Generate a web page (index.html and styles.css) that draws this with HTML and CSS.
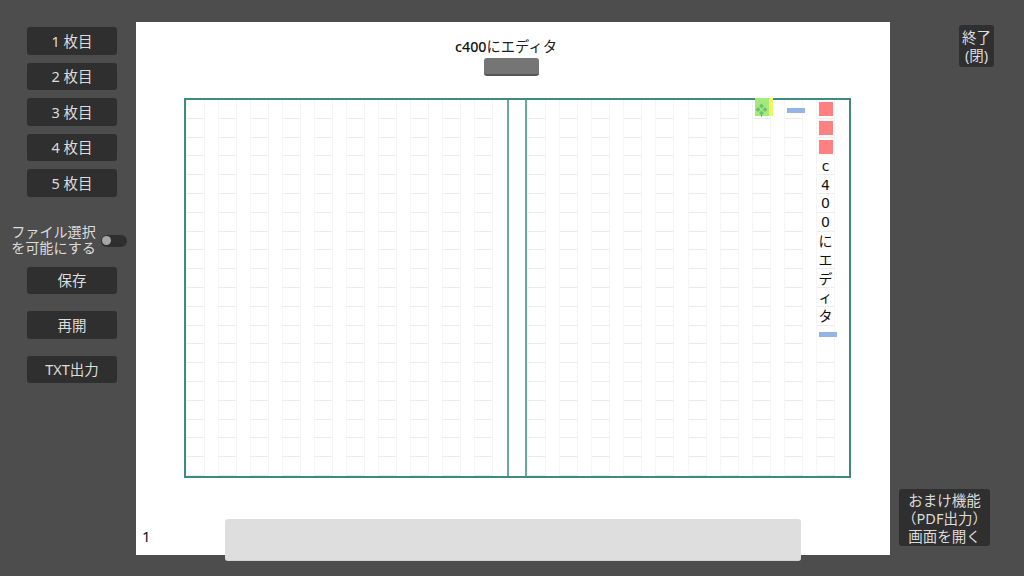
FILE: index.html
```html
<!DOCTYPE html>
<html lang="ja">
<head>
<meta charset="utf-8">
<title>c400にエディタ</title>
<link rel="stylesheet" href="styles.css">
</head>
<body>
<div class="app">
  <aside class="side">
    <button class="btn sheet">1 枚目</button>
    <button class="btn sheet">2 枚目</button>
    <button class="btn sheet">3 枚目</button>
    <button class="btn sheet">4 枚目</button>
    <button class="btn sheet">5 枚目</button>
    <div class="toggle-row">
      <span class="toggle-label">ファイル選択<br>を可能にする</span>
      <span class="toggle"><span class="knob"></span></span>
    </div>
    <button class="btn save">保存</button>
    <button class="btn resume">再開</button>
    <button class="btn txt">TXT出力</button>
  </aside>
  <main class="paper">
    <h1 class="title"><span class="latin">c400</span>にエディタ</h1>
    <div class="title-btn"></div>
    <div class="board">
      <div class="page page-left">
        <div class="col"></div><div class="col"></div><div class="col"></div><div class="col"></div><div class="col"></div>
        <div class="col"></div><div class="col"></div><div class="col"></div><div class="col"></div><div class="col"></div>
      </div>
      <div class="spine"></div>
      <div class="page page-right">
        <div class="col"></div><div class="col"></div><div class="col"></div><div class="col"></div><div class="col"></div>
        <div class="col"></div><div class="col"></div>
        <div class="col">
          <div class="cursor">
            <svg class="clover" viewBox="0 0 12 12" width="13" height="13">
              <path d="M6 .5 8.2 2.8 6 5 3.8 2.8ZM2.8 3.8 5 6 2.8 8.2.5 6ZM9.2 3.8 11.5 6 9.2 8.2 7 6ZM6 7 8.2 9.2 6 11.5 3.8 9.2Z"/>
              <path class="stem" d="M5.4 11.6h1.2L6 13Z"/>
            </svg>
          </div>
        </div>
        <div class="col"><div class="dash dash-top"></div></div>
        <div class="col">
          <div class="cell"><span class="mark"></span></div>
          <div class="cell"><span class="mark"></span></div>
          <div class="cell"><span class="mark"></span></div>
          <div class="cell">c</div>
          <div class="cell">4</div>
          <div class="cell">0</div>
          <div class="cell">0</div>
          <div class="cell">に</div>
          <div class="cell">エ</div>
          <div class="cell">デ</div>
          <div class="cell">ィ</div>
          <div class="cell">タ</div>
          <div class="cell cell-dash"><span class="dash"></span></div>
        </div>
      </div>
    </div>
    <div class="foot">
      <span class="page-no">1</span>
      <div class="bar"></div>
    </div>
  </main>
  <aside class="right">
    <button class="btn end">終了<br>(閉)</button>
    <button class="btn extra">おまけ機能<br>（PDF出力）<br>画面を開く</button>
  </aside>
</div>
</body>
</html>
```

FILE: styles.css
```css
* { box-sizing: border-box; }
html, body { margin: 0; height: 100%; }
body {
  background: #4d4d4d;
  font-family: "Noto Sans", "Noto Sans CJK JP", sans-serif;
  overflow: hidden;
}
.app { display: flex; width: 1024px; height: 576px; }

.btn {
  display: block;
  border: 0;
  padding: 0;
  background: #2f2f2f;
  color: #dcdcdc;
  border-radius: 3px;
  font: inherit;
  font-size: 14.5px;
  line-height: 16px;
  text-align: center;
}

.side {
  width: 136px;
  flex: none;
  padding: 27px 0 0 27px;
  display: flex;
  flex-direction: column;
}
.side .btn { width: 90px; height: 27.5px; flex: none; }
.sheet { margin-bottom: 8px; }
.toggle-row {
  display: flex;
  align-items: center;
  margin: 20px 0 0 -16px;
  height: 32px;
}
.toggle-label {
  width: 85px;
  margin-right: 5px;
  color: #dcdcdc;
  font-family: "Liberation Sans", "Noto Sans CJK JP", sans-serif;
  font-size: 14.1px;
  line-height: 15.5px;
  text-align: center;
  white-space: nowrap;
}
.toggle {
  width: 26px;
  height: 12px;
  border-radius: 6px;
  background: #2f2f2f;
  display: flex;
  align-items: center;
}
.knob { width: 9px; height: 9px; border-radius: 50%; background: #a6a6a6; margin-left: 1px; }
.side .save { margin-top: 10px; }
.side .resume { margin-top: 17px; }
.side .txt { margin-top: 17px; }

.paper {
  width: 754px;
  height: 533px;
  flex: none;
  margin-top: 22px;
  background: #fff;
  display: flex;
  flex-direction: column;
  align-items: center;
}
.title {
  margin: 15px 14px 0 0;
  font-size: 14.3px;
  line-height: 19px;
  font-weight: 400;
  color: #222;
  text-align: center;
  flex: none;
}
.latin { font-weight: 500; color: #111; }
.title-btn {
  width: 55px;
  height: 18px;
  flex: none;
  margin: 2px 3px 0 0;
  background: #757575;
  border-bottom: 2px solid #555;
  border-radius: 3px;
}
.board {
  width: 667px;
  height: 380px;
  margin: 22px 0 0 9px;
  border: 2px solid #3d8a80;
  display: flex;
  flex: none;
}
.page {
  display: flex;
  justify-content: space-between;
  padding-right: 14px;
}
.page-left { width: 321px; }
.page-right { width: 322px; }
.spine {
  width: 20px;
  flex: none;
  border-left: 2px solid #6aa7a0;
  border-right: 2px solid #6aa7a0;
}
.col {
  width: 19px;
  height: 376px;
  border-left: 1px solid #f5f5f5;
  border-right: 1px solid #f5f5f5;
  background: repeating-linear-gradient(to bottom, transparent 0, transparent 17.8px, #ebebeb 17.8px, #ebebeb 18.8px);
  position: relative;
}
.cell {
  height: 18.8px;
  display: flex;
  align-items: center;
  justify-content: center;
  font-family: "DejaVu Sans", "Noto Sans CJK JP", sans-serif;
  font-size: 14px;
  color: #111;
  line-height: 1;
  background: linear-gradient(to bottom, #fff 0, #fff 17.8px, #ededed 17.8px);
}
.cell-dash { justify-content: flex-start; }
.mark { width: 14px; height: 14px; background: #ff8080; flex: none; margin-left: 1px; }
.dash { display: block; width: 18px; height: 5px; background: #93b4e4; flex: none; }
.cell-dash .dash { margin-left: 2px; }
.dash-top { position: absolute; left: 2px; top: 8px; }
.cursor {
  position: absolute;
  left: 2px;
  top: -2px;
  width: 18px;
  height: 18px;
  background: linear-gradient(to right, #a4ea7c 0, #a4ea7c 14px, #eef55e 14px);
  display: flex;
  align-items: center;
  justify-content: center;
  padding-right: 4px;
  padding-top: 5px;
}
.clover { fill: #6cc070; display: block; overflow: visible; flex: none; }
.clover .stem { fill: #444; }

.foot {
  align-self: stretch;
  display: flex;
  margin-top: 41px;
  height: 42px;
  flex: none;
}
.page-no {
  width: 89px;
  padding: 7px 0 0 6px;
  font-size: 15px;
  line-height: 20px;
  color: #111;
}
.bar {
  width: 576px;
  height: 42px;
  background: #dedede;
  border-radius: 3px;
  border-bottom: 1px solid #d2d2d2;
}

.right {
  flex: 1;
  display: flex;
  flex-direction: column;
  align-items: flex-end;
  justify-content: space-between;
  padding: 25px 0 30px;
}
.right .end { width: 35px; height: 42px; margin-right: 30px; line-height: 18px; }
.right .extra { width: 91px; height: 57px; margin-right: 34px; line-height: 18px; }
```
